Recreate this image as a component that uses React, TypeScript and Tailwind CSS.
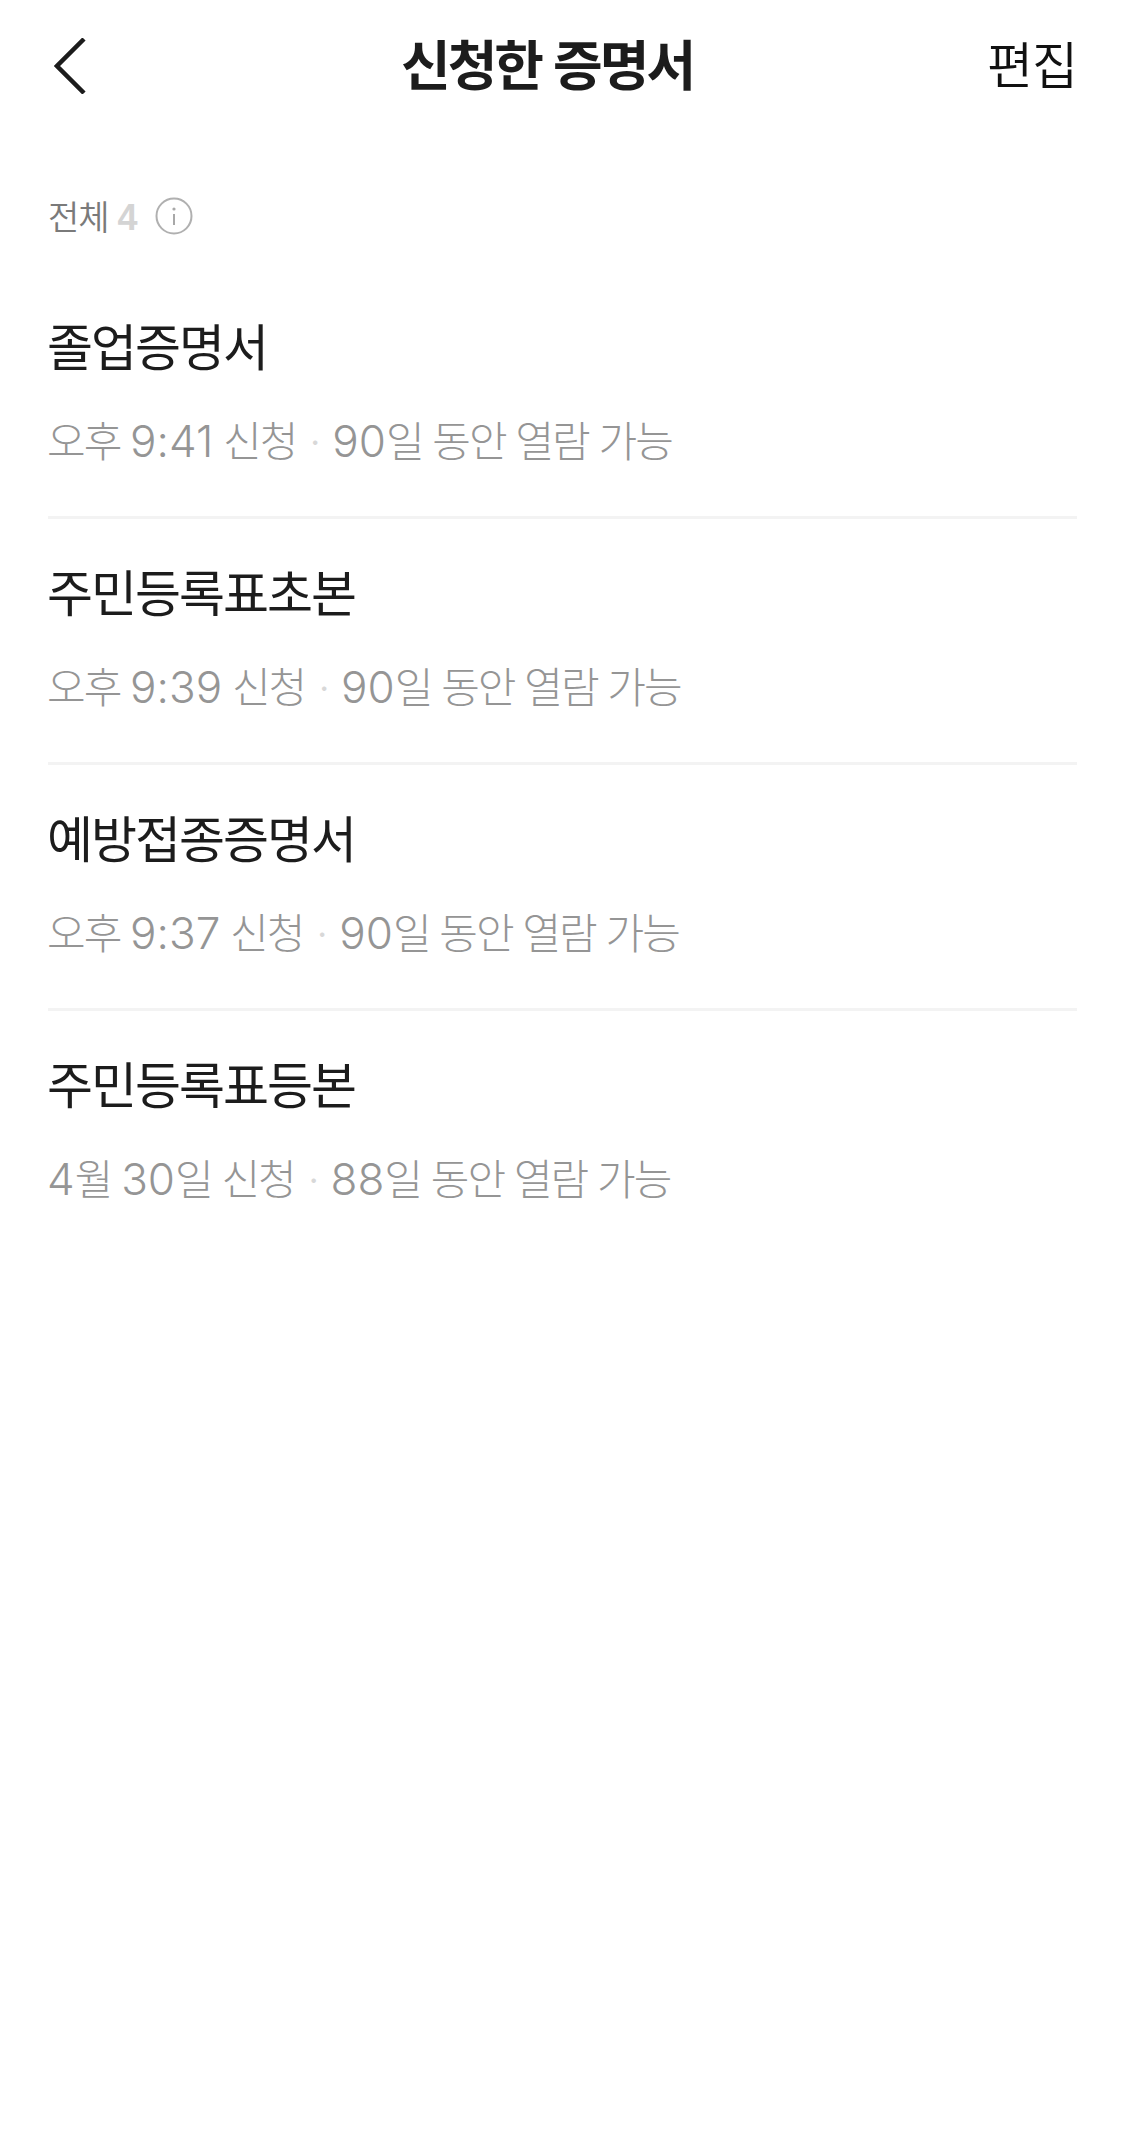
const FONT = "font-['Liberation_Sans','Noto_Sans_CJK_KR',sans-serif]";

const rows = [
  { title: "졸업증명서", left: "오후 9:41 신청", right: "90일 동안 열람 가능" },
  { title: "주민등록표초본", left: "오후 9:39 신청", right: "90일 동안 열람 가능" },
  { title: "예방접종증명서", left: "오후 9:37 신청", right: "90일 동안 열람 가능" },
  { title: "주민등록표등본", left: "4월 30일 신청", right: "88일 동안 열람 가능" },
];

function Meta({ text }: { text: string }) {
  return (
    <span>
      {text.split(/([0-9:]+)/).map((part, i) =>
        /^[0-9:]+$/.test(part) ? (
          <span key={i} className="text-[44px] tracking-[0px]">{part}</span>
        ) : (
          <span key={i}>{part}</span>
        )
      )}
    </span>
  );
}

export default function App() {
  return (
    <div className={`${FONT} w-[1125px] h-[2143px] bg-white overflow-hidden`}>
      <header className="relative h-[128px] flex items-center justify-between pl-[54px] pr-[48px]">
        <svg className="mt-[3px]" width="32" height="56" viewBox="0 0 32 56" fill="none">
          <path d="M30 1 L3 28 L30 55" stroke="#1c1c1c" strokeWidth="4.5" />
        </svg>
        <h1 className="absolute left-[401px] top-[33px] text-[54px] leading-[68px] font-bold text-[#1c1c1c] tracking-[-3px] whitespace-nowrap">신청한 증명서</h1>
        <span className="mt-[6px] text-[50px] leading-[64px] text-[#111111] tracking-[-1px] font-[350]">편집</span>
      </header>
      <div className="px-[48px] pt-[68px]">
        <div className="flex items-center h-[40px]">
          <span className="mt-[3px] text-[34px] leading-[40px] tracking-[-1px] font-[350] text-[#7a7a7a]">전체</span>
          <span className="mt-[3px] ml-[9px] text-[36px] leading-[40px] font-bold text-[#d4d4d4]">4</span>
          <svg className="ml-[17px]" width="38" height="38" viewBox="0 0 38 38" fill="none">
            <circle cx="19" cy="19" r="17.5" stroke="#b0b0b0" strokeWidth="2" />
            <circle cx="19" cy="12" r="1.6" fill="#a8a8a8" />
            <path d="M19 17 V28" stroke="#a8a8a8" strokeWidth="2" />
          </svg>
        </div>
        <ul className="mt-[37px]">
          {rows.map((r, i) => (
            <li key={r.title} className={`h-[246px] pt-[42px] ${i < 3 ? "border-b-[3px] border-[#f3f3f3]" : ""}`}>
              <div className="-ml-[1px] text-[50px] leading-[68px] text-[#1c1c1c] tracking-[-2px]">{r.title}</div>
              <div className="mt-[30px] -ml-[1px] flex items-center font-['Inter','Noto_Sans_CJK_KR',sans-serif] text-[42px] leading-[56px] text-[#959595] tracking-[-2px] whitespace-nowrap font-light">
                <Meta text={r.left} />
                <span className="mx-[13px] text-[#d8d8d8]">·</span>
                <Meta text={r.right} />
              </div>
            </li>
          ))}
        </ul>
      </div>
    </div>
  );
}
